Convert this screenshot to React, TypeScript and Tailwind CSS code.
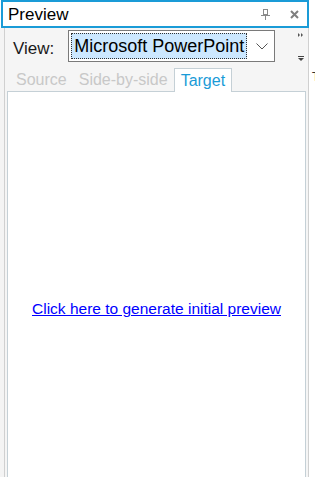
export default function App() {
  return (
    <div className="relative w-[315px] h-[477px] overflow-hidden bg-white font-['Liberation_Sans',Arial,sans-serif]">
      {/* Title bar */}
      <div className="ml-[1px] w-[308px] h-[28px] border-2 border-[#1a9bd7] bg-white flex items-center pl-[5px] pr-[8px]">
        <span className="text-[17px] leading-none text-black">Preview</span>
        <div className="ml-auto flex items-center gap-[20px]">
          <svg width="9" height="11" viewBox="0 0 9 11" className="mt-[1px]">
            <rect x="2.5" y="0.5" width="4" height="5" fill="none" stroke="#8a8a8a" strokeWidth="1" />
            <line x1="0" y1="6.5" x2="9" y2="6.5" stroke="#8a8a8a" strokeWidth="1" />
            <line x1="4.5" y1="7" x2="4.5" y2="11" stroke="#8a8a8a" strokeWidth="1" />
          </svg>
          <svg width="9" height="9" viewBox="0 0 9 9">
            <path d="M1 1 L8 8 M8 1 L1 8" stroke="#7f7f7f" strokeWidth="2" />
          </svg>
        </div>
      </div>

      <div className="flex h-[449px]">
        <div className="w-[4px] bg-[#f4f4f4]" />

        {/* Panel */}
        <div className="w-[305px] border-x border-[#d0d0d0] bg-[#f5f5f5] flex flex-col px-[2px]">
          {/* View row */}
          <div className="relative h-[40px] flex items-start">
            <span className="ml-[6px] mt-[12px] text-[17px] leading-none text-[#1a1a1a]">View:</span>
            <div className="ml-[14px] mt-[2px] w-[207px] h-[32px] border border-[#7a7a7a] bg-white flex items-center pl-[2px]">
              <div className="h-[26px] w-[176px] bg-[#cce8ff] border border-dotted border-[#333] flex items-center pl-[2px]">
                <span className="text-[18px] leading-none text-black whitespace-nowrap">Microsoft PowerPoint</span>
              </div>
              <svg width="12" height="7" viewBox="0 0 12 7" className="ml-[9px]">
                <path d="M0.5 0.5 L6 6 L11.5 0.5" fill="none" stroke="#555" strokeWidth="1" />
              </svg>
            </div>
            <div className="ml-auto mr-[2px] mt-[5px] flex flex-col items-center">
              <svg width="6" height="4" viewBox="0 0 6 4">
                <path d="M0 0 L2 2 L0 4 Z M3 0 L5 2 L3 4 Z" fill="#555" />
              </svg>
              <svg width="6" height="6" viewBox="0 0 6 6" className="mt-[19px]">
                <rect x="0" y="0" width="6" height="1" fill="#444" />
                <path d="M0 2 L6 2 L3 5 Z" fill="#444" />
              </svg>
            </div>
          </div>

          {/* Tabs */}
          <div className="relative z-10 flex h-[24px] ml-[3px] -mb-[1px] text-[16px] leading-none">
            <div className="px-[6px] flex items-center text-[#c8c8c8]">Source</div>
            <div className="px-[6px] flex items-center text-[#c8c8c8]">Side-by-side</div>
            <div className="px-[6px] flex items-center text-[#1a9bd7] bg-white border border-b-0 border-[#c5d0d6]">Target</div>
          </div>

          {/* Content */}
          <div className="flex-1 bg-white border border-b-0 border-[#c5d0d6] flex justify-center pt-[208px]">
            <a href="#" className="text-[15.5px] leading-[18px] text-[#0000ff] underline h-[18px]">
              Click here to generate initial preview
            </a>
          </div>
        </div>

        {/* Right strip */}
        <div className="flex-1 relative overflow-hidden bg-white">
          <span className="absolute left-[3px] top-[43px] text-[12px] leading-none text-[#333]">T</span>
        </div>
      </div>
    </div>
  );
}
